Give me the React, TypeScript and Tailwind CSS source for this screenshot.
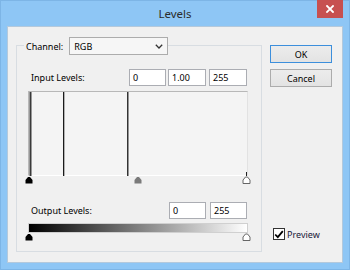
import React from "react";

const font = { fontFamily: '"Noto Sans", "Liberation Sans", Arial, sans-serif' };

function Tri({ cx, fill, stroke }: { cx: number; fill: string; stroke?: string }) {
  const t = 1;
  const d = `M ${cx - 1} ${t} L ${cx + 1} ${t} L ${cx + 3.5} ${t + 3} L ${cx + 3.5} ${t + 6.5} L ${cx - 3.5} ${t + 6.5} L ${cx - 3.5} ${t + 3} Z`;
  return <path d={d} fill={fill} stroke={stroke ?? "none"} strokeWidth={stroke ? 1 : 0} />;
}

function Box({ w, value }: { w: string; value: string }) {
  return (
    <div className={`${w} h-[17px] bg-white border border-[#abadb3] flex items-center pl-[3px] text-[9px] text-black leading-none`}>
      {value}
    </div>
  );
}

export default function App() {
  return (
    <div className="w-[350px] h-[270px] bg-[#8ec6f5] border border-[#7db5e6] flex flex-col" style={font}>
      {/* title bar */}
      <div className="h-[25px] flex relative">
        <div className="flex-1 flex items-center justify-center text-[11.5px] text-[#2b2b2b] pt-[1px]">Levels</div>
        <div className="absolute right-[6px] top-[-1px] w-[26px] h-[18px] bg-[#c75050] flex items-center justify-center">
          <svg width="8" height="8" viewBox="0 0 8 8">
            <path d="M1 1 L7 7 M7 1 L1 7" stroke="white" strokeWidth="1.8" strokeLinecap="square" />
          </svg>
        </div>
      </div>
      {/* client */}
      <div className="ml-[6px] w-[336px] h-[237px] bg-[#f0f0f0] border border-[#b4c9dc] flex">
        {/* group box */}
        <div className="ml-[8px] mt-[18px] w-[246px] h-[207px] border border-[#d8dde2] flex flex-col">
          <div className="flex items-center -mt-[9px] ml-[7px] h-[18px]">
            <span className="bg-[#f0f0f0] pl-[2px] pr-[6px] text-[9px] text-black leading-none h-[12px] flex items-center">Channel:</span>
            <div className="w-[99px] h-[18px] border border-[#acacac] bg-[#f6f6f6] flex items-center justify-between pl-[4px] pr-[4px]">
              <span className="text-[9px] text-black leading-none">RGB</span>
              <svg width="8" height="5" viewBox="0 0 8 5">
                <path d="M0.8 0.8 L4 4 L7.2 0.8" fill="none" stroke="#333" strokeWidth="1.3" />
              </svg>
            </div>
          </div>
          <div className="ml-[11px] w-[220px] flex flex-col">
            <div className="mt-[14px] h-[17px] flex items-center">
              <span className="ml-[3px] text-[9px] text-black leading-none">Input Levels:</span>
              <div className="ml-auto mr-[1px] flex gap-[2px]">
                <Box w="w-[37px]" value="0" />
                <Box w="w-[38px]" value="1.00" />
                <div className="ml-[1px]"><Box w="w-[38px]" value="255" /></div>
              </div>
            </div>
            <div className="mt-[5px] w-[220px] h-[85px] bg-[#f4f4f4] border-t border-l border-[#b8b8b8] border-r border-b border-r-[#e2e2e2] border-b-[#ffffff]">
              <svg width="218" height="84" viewBox="0 0 218 84" className="block">
                <rect x="0.5" y="0" width="2" height="84" fill="#3a3a3a" />
                <rect x="34" y="0" width="1.3" height="84" fill="#1a1a1a" />
                <rect x="98" y="0" width="1.5" height="84" fill="#333" />
                <rect x="217" y="80" width="1" height="4" fill="#222" />
              </svg>
            </div>
            <svg width="220" height="9" viewBox="0 0 220 9" className="block overflow-visible">
              <Tri cx={1} fill="#000" />
              <Tri cx={110} fill="#7a7a7a" />
              <Tri cx={218.5} fill="#fff" stroke="#666" />
            </svg>
            <div className="mt-[17px] h-[17px] flex items-center">
              <span className="ml-[3px] text-[9px] text-black leading-none">Output Levels:</span>
              <div className="ml-auto mr-[1px] flex gap-[4px]">
                <Box w="w-[37px]" value="0" />
                <Box w="w-[37px]" value="255" />
              </div>
            </div>
            <div className="mt-[4px] w-[220px] h-[10px] border border-[#d0d0d0] bg-[linear-gradient(to_right,#000000,#ffffff)]" />
            <svg width="220" height="9" viewBox="0 0 220 9" className="block overflow-visible">
              <Tri cx={1} fill="#000" />
              <Tri cx={218.5} fill="#fff" stroke="#666" />
            </svg>
          </div>
        </div>
        {/* right column */}
        <div className="ml-[8px] mt-[18px] w-[62px] flex flex-col">
          <div className="h-[18px] border border-[#3c8fdc] bg-[linear-gradient(#ececec,#e3e3e3)] flex items-center justify-center text-[9px] text-black leading-none">OK</div>
          <div className="mt-[6px] h-[18px] border border-[#acacac] bg-[linear-gradient(#ececec,#e3e3e3)] flex items-center justify-center text-[9px] text-black leading-none">Cancel</div>
          <div className="mt-[141px] ml-[3px] flex items-center">
            <div className="w-[12px] h-[12px] border border-[#333] bg-white flex items-center justify-center">
              <svg width="10" height="9" viewBox="0 0 10 9">
                <path d="M1.2 4.5 L3.8 7.2 L8.8 1.2" fill="none" stroke="#000" strokeWidth="1.8" />
              </svg>
            </div>
            <span className="ml-[2px] text-[9px] text-[#1a1a3a] leading-none">Preview</span>
          </div>
        </div>
      </div>
    </div>
  );
}
